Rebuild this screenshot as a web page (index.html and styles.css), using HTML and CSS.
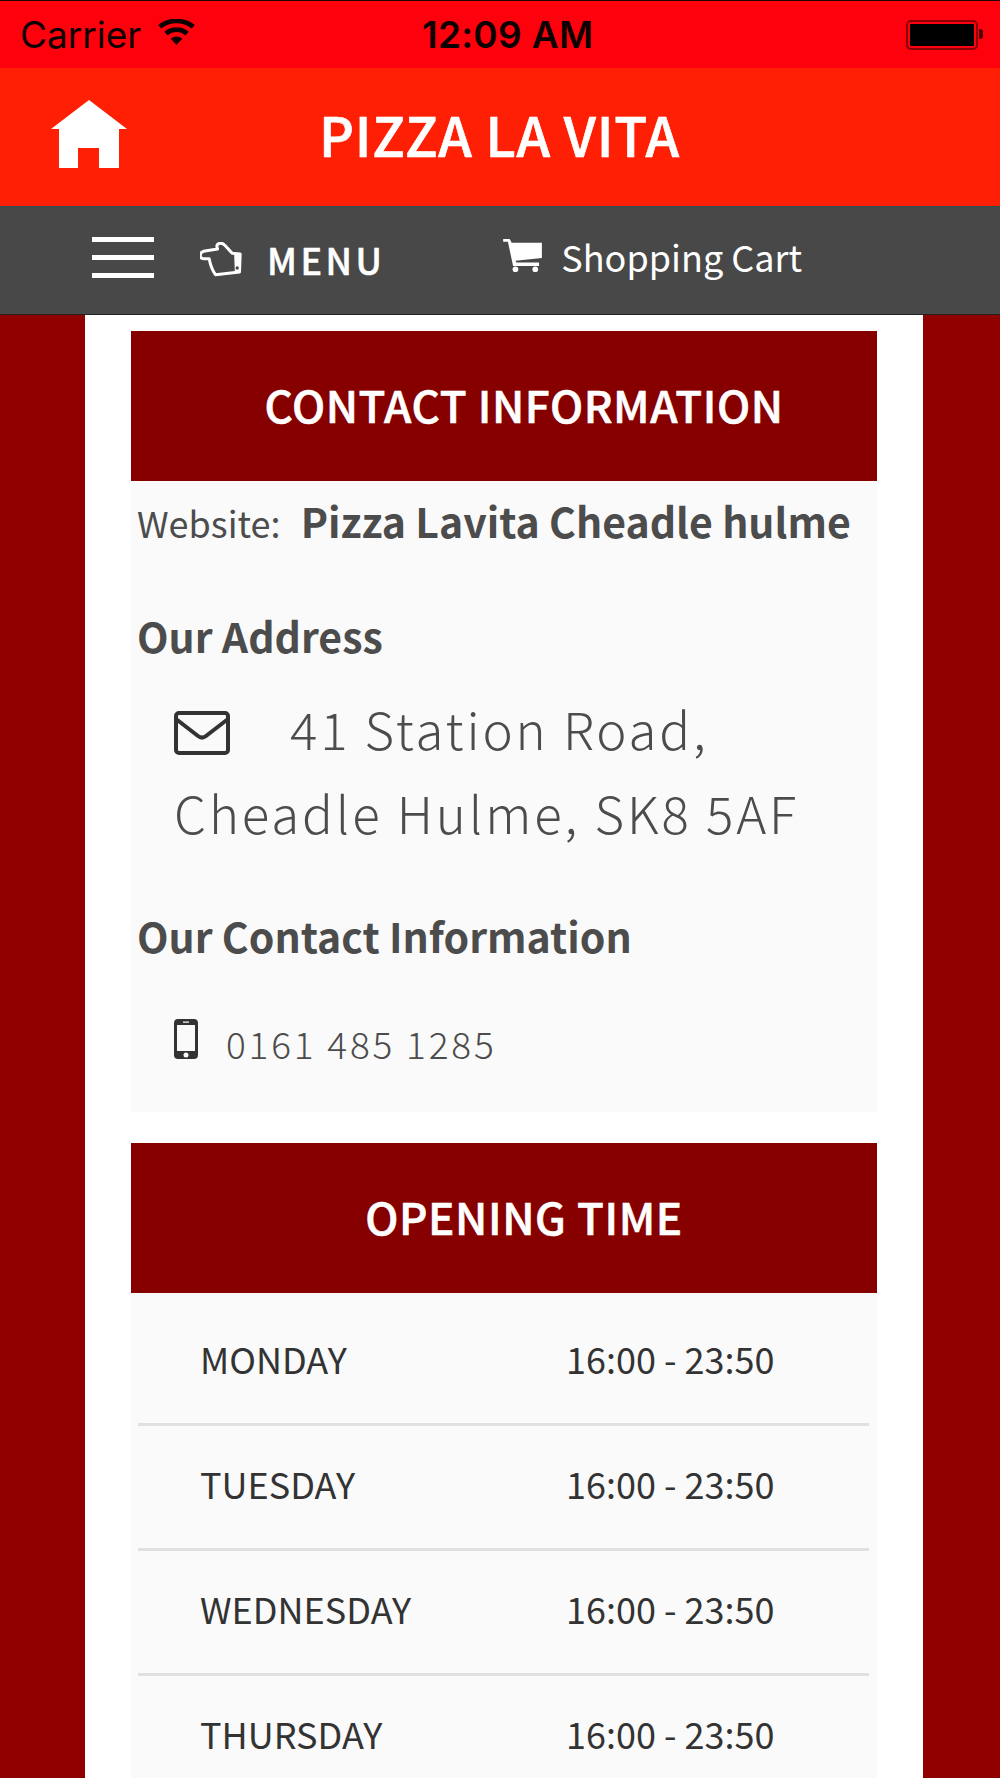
FILE: index.html
```html
<!DOCTYPE html>
<html lang="en">
<head>
  <meta charset="UTF-8">
  <meta name="viewport" content="width=device-width, initial-scale=1.0">
  <title>Pizza La Vita</title>
  <link rel="stylesheet" href="styles.css">
</head>
<body>

<div class="status-bar">
  <div class="status-left">
    <span>Carrier</span>
    <svg class="wifi-icon" viewBox="0 0 38 28"><path d="M19 27 L13 20.5 C16.5 17.5 21.5 17.5 25 20.5 Z"/><path d="M9.8 17 L6.3 13.2 C13.5 7 24.5 7 31.7 13.2 L28.2 17 C22.8 12.3 15.2 12.3 9.8 17 Z"/><path d="M3.2 9.8 L0 6.3 C10.8 -2.6 27.2 -2.6 38 6.3 L34.8 9.8 C25.8 2.5 12.2 2.5 3.2 9.8 Z"/></svg>
  </div>
  <div class="status-time">12:09 AM</div>
  <div class="battery"><div class="battery-fill"></div><div class="battery-tip"></div></div>
</div>

<div class="app-header">
  <svg class="home-icon" viewBox="0 0 76 68"><path d="M38 0 L76 29 L68 29 L68 68 L48 68 L48 48 L27 48 L27 68 L8 68 L8 29 L0 29 Z"/></svg>
  <h1>PIZZA LA VITA</h1>
</div>

<div class="menu-bar">
  <div class="burger"><span></span><span></span><span></span></div>
  <svg class="hand-icon" viewBox="0 0 125 105"><path d="M10 28 C-3 32 -3 50 10 50 L27 50 C30 66 36 84 46 98 L118 90 L120 36 L96 34 L74 10 C66 0 50 2 50 14 L52 21 Z" fill="none" stroke="#fff" stroke-width="9" stroke-linejoin="round"/><path d="M102 36 L104 90 L120 90 L120 36 Z" fill="#fff"/><circle cx="111" cy="78" r="5" fill="#484848"/></svg>
  <span class="menu-label">MENU</span>
  <svg class="cart-icon" viewBox="0 0 42 36"><path d="M0 0 L7 0 L9 4 L41 4 L41 20 L13 23 L14 25 L38 25 L38 28.500 L10.500 28.500 L5 3 L0 3 Z"/><circle cx="13" cy="32" r="3"/><circle cx="34" cy="32" r="3"/></svg>
  <span class="cart-label">Shopping Cart</span>
</div>

<div class="page">
  <div class="column">

    <div class="panel-title">CONTACT INFORMATION</div>
    <div class="contact-body">
      <p class="website"><span class="website-label">Website:</span> <b>Pizza Lavita Cheadle hulme</b></p>
      <h3>Our Address</h3>
      <p class="address">
        <svg class="mail-icon" viewBox="0 0 56 44"><rect x="2" y="2" width="52" height="40" rx="3" fill="none" stroke="#333" stroke-width="4"/><path d="M2 8 L24 25 C26.500 27 29.500 27 32 25 L54 8" fill="none" stroke="#333" stroke-width="4"/></svg>41 Station Road,<br>Cheadle Hulme, SK8 5AF
      </p>
      <h3>Our Contact Information</h3>
      <p class="phone">
        <svg class="phone-icon" viewBox="0 0 24 40"><path fill-rule="evenodd" d="M4 0 H20 C22.500 0 24 1.500 24 4 V36 C24 38.500 22.500 40 20 40 H4 C1.500 40 0 38.500 0 36 V4 C0 1.500 1.500 0 4 0 Z M3 6 V32 H21 V6 Z M9 2.500 V3.800 H15 V2.500 Z M12 33.500 A2.500 2.500 0 1 0 12 38.500 A2.500 2.500 0 1 0 12 33.500 Z" fill="#333"/></svg>
        <span>0161 485 1285</span>
      </p>
    </div>

    <div class="panel-title opening">OPENING TIME</div>
    <div class="hours">
      <div class="hours-row"><span>MONDAY</span><span>16:00 - 23:50</span></div>
      <div class="hours-row"><span>TUESDAY</span><span>16:00 - 23:50</span></div>
      <div class="hours-row"><span>WEDNESDAY</span><span>16:00 - 23:50</span></div>
      <div class="hours-row"><span>THURSDAY</span><span>16:00 - 23:50</span></div>
    </div>

  </div>
</div>

</body>
</html>
```

FILE: styles.css
```css
html, body {
  margin: 0;
  padding: 0;
}

body {
  width: 1000px;
  height: 1778px;
  overflow: hidden;
  background-color: #900000;
  font-family: "Noto Sans CJK SC", "Noto Sans", sans-serif;
}

/* top strip */
.status-bar {
  height: 68px;
  box-sizing: border-box;
  border-top: 1px solid #200;
  background-color: #ff000d;
  display: flex;
  align-items: center;
  justify-content: space-between;
  padding: 0 20px;
  font-family: Inter, "Liberation Sans", sans-serif;
  font-size: 37px;
  color: #0c0000;
}

.status-left {
  display: flex;
  align-items: center;
  gap: 17px;
}

.wifi-icon {
  width: 37px;
  height: 27px;
  fill: #0c0000;
  margin-top: -4px;
}

.status-time {
  font-weight: 600;
  letter-spacing: 0.3px;
  margin-left: -86px;
}

.battery {
  position: relative;
  width: 72px;
  height: 30px;
  box-sizing: border-box;
  border: 2px solid #8a0006;
  border-radius: 5px;
  padding: 2px;
  margin-right: 2px;
}

.battery-fill {
  height: 100%;
  background-color: #000;
  border-radius: 1px;
}

.battery-tip {
  position: absolute;
  right: -7px;
  top: 7px;
  width: 4px;
  height: 10px;
  background-color: #500;
  border-radius: 0 3px 3px 0;
}

/* red title bar */
.app-header {
  height: 138px;
  background-color: #ff1f05;
  display: flex;
  align-items: center;
  color: #fff;
}

.home-icon {
  width: 76px;
  height: 68px;
  fill: #fff;
  margin-left: 51px;
  margin-top: -6px;
}

.app-header h1 {
  margin: -6px 0 0 192px;
  font-size: 54px;
  line-height: 60px;
  font-weight: 500;
  letter-spacing: 0.8px;
  -webkit-text-stroke: 0.7px #fff;
}

/* grey menu bar */
.menu-bar {
  height: 108px;
  box-sizing: border-box;
  border-top: 1px solid #2f4f4f;
  background-color: #484848;
  display: flex;
  align-items: center;
  color: #fff;
  padding-left: 92px;
}

.burger {
  width: 62px;
  display: flex;
  flex-direction: column;
  gap: 13px;
  margin-top: -7px;
}

.burger span {
  height: 5px;
  background-color: #fff;
}

.hand-icon {
  width: 42px;
  height: 35px;
  margin-left: 46px;
  margin-top: -2px;
}

.menu-label {
  margin-left: 25px;
  font-size: 36px;
  line-height: 44px;
  letter-spacing: 3.500px;
  font-weight: 500;
  margin-top: -3px;
  -webkit-text-stroke: 0.5px #fff;
}

.cart-icon {
  width: 40px;
  height: 34px;
  fill: #fff;
  margin-left: 118px;
  margin-top: -10px;
}

.cart-label {
  margin-left: 18px;
  font-size: 36px;
  line-height: 44px;
  margin-top: -9px;
}

/* white column on the dark red page */
.page {
  display: flex;
  justify-content: center;
  padding-left: 8px;
  border-top: 1px solid #222;
}

.column {
  width: 838px;
  height: 1463px;
  box-sizing: border-box;
  padding: 16px 46px 0;
  background-color: #fff;
}

.panel-title {
  height: 150px;
  display: flex;
  align-items: center;
  justify-content: center;
  padding: 0 0 4px 40px;
  box-sizing: border-box;
  background-color: #860000;
  color: #fff;
  font-size: 44px;
  font-weight: 500;
  letter-spacing: 0.6px;
  -webkit-text-stroke: 0.6px #fff;
}

.panel-title.opening {
  margin-top: 31px;
}

.contact-body {
  height: 631px;
  box-sizing: border-box;
  background-color: #fafafa;
  padding: 13px 6px 0;
  color: #4c4c4c;
}

.contact-body p {
  margin: 0;
}

.website {
  font-size: 41px;
  line-height: 52px;
}

.website-label {
  font-size: 36px;
  margin-right: 11px;
}

.contact-body h3 {
  margin: 0;
  font-size: 41px;
  line-height: 52px;
  font-weight: 700;
}

.contact-body .website + h3 {
  margin-top: 61px;
}

.address {
  margin-top: 25px !important;
  padding-left: 37px;
  font-size: 51px;
  line-height: 84px;
  font-weight: 300;
  letter-spacing: 2.900px;
}

.mail-icon {
  width: 56px;
  height: 44px;
  margin-right: 60px;
  vertical-align: -5px;
}

.address + h3 {
  margin-top: 55px;
}

.phone {
  margin-top: 60px !important;
  padding-left: 37px;
  display: flex;
  align-items: center;
  gap: 28px;
  font-size: 37px;
  line-height: 44px;
  font-weight: 300;
  letter-spacing: 2.800px;
}

.phone-icon {
  width: 24px;
  height: 40px;
  margin-top: -8px;
}

.hours {
  background-color: #fafafa;
  padding: 0 8px 0 7px;
  color: #333;
}

.hours-row {
  height: 125px;
  box-sizing: border-box;
  border-bottom: 3px solid #dfe1e3;
  display: flex;
  align-items: center;
  padding: 0 0 8px 62px;
  font-size: 36px;
}

.hours-row:first-child {
  height: 133px;
  padding-top: 8px;
}

.hours-row span:first-child {
  width: 366px;
}
```
